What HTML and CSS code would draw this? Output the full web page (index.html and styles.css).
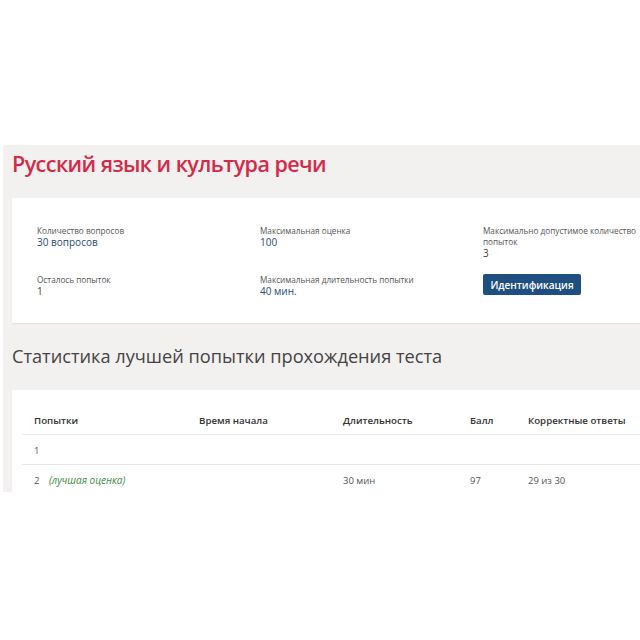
FILE: index.html
```html
<!DOCTYPE html>
<html lang="ru">
<head>
<meta charset="utf-8">
<title>Русский язык и культура речи</title>
<link rel="stylesheet" href="styles.css">
</head>
<body>
<div class="frame">
  <h1 class="course-title">Русский язык и культура речи</h1>
  <section class="card info">
    <div class="info-grid">
      <div class="field">
        <div class="label">Количество вопросов</div>
        <div class="value">30 вопросов</div>
      </div>
      <div class="field">
        <div class="label">Максимальная оценка</div>
        <div class="value">100</div>
      </div>
      <div class="field narrow">
        <div class="label">Максимально допустимое количество попыток</div>
        <div class="value plain">3</div>
      </div>
      <div class="field">
        <div class="label">Осталось попыток</div>
        <div class="value plain">1</div>
      </div>
      <div class="field">
        <div class="label">Максимальная длительность попытки</div>
        <div class="value">40 мин.</div>
      </div>
      <div class="field">
        <button class="btn">Идентификация</button>
      </div>
    </div>
  </section>
  <h2 class="section-title">Статистика лучшей попытки прохождения теста</h2>
  <section class="card stats">
    <div class="row head">
      <div>Попытки</div>
      <div>Время начала</div>
      <div>Длительность</div>
      <div>Балл</div>
      <div>Корректные ответы</div>
    </div>
    <div class="row">
      <div>1</div>
      <div></div>
      <div></div>
      <div></div>
      <div></div>
    </div>
    <div class="row">
      <div>2 <span class="best">(лучшая оценка)</span></div>
      <div></div>
      <div>30 мин</div>
      <div>97</div>
      <div>29 из 30</div>
    </div>
  </section>
</div>
</body>
</html>
```

FILE: styles.css
```css
html, body {
  margin: 0;
  padding: 0;
  background: #ffffff;
}
body {
  font-family: "Open Sans", "Liberation Sans", sans-serif;
  color: #555;
  padding-top: 145px;
  padding-left: 3px;
}
.frame {
  background: #f2f1ef;
  height: 347px;
  overflow: hidden;
  padding-left: 9px;
  box-sizing: border-box;
}
.course-title {
  margin: 0;
  padding-top: 4px;
  font-size: 21.5px;
  line-height: 30px;
  font-weight: 600;
  letter-spacing: -0.55px;
  color: #d42a49;
}
.card {
  background: #fff;
}
.info {
  margin-top: 19px;
  padding: 27px 0 26px 25px;
  border-bottom: 1px solid #e4e2df;
}
.info-grid {
  display: grid;
  grid-template-columns: 223px 223px 166px;
  row-gap: 15px;
}
.label {
  font-size: 8.2px;
  line-height: 11px;
  color: #555;
}
.value {
  font-size: 10px;
  line-height: 12px;
  color: #1f4a78;
}
.value.plain {
  color: #444;
}
.btn {
  display: block;
  width: 98px;
  height: 21px;
  padding: 0;
  border: none;
  border-radius: 2px;
  background: #1f4f80;
  color: #fff;
  font-family: "Open Sans", "Liberation Sans", sans-serif;
  font-size: 10px;
  font-weight: 600;
}
.section-title {
  margin: 0;
  padding-top: 20px;
  font-size: 18.2px;
  line-height: 24px;
  font-weight: 400;
  color: #444;
}
.stats {
  margin-top: 22px;
  padding: 18px 0 0 10px;
  height: 200px;
}
.row {
  display: grid;
  grid-template-columns: 165px 144px 127px 58px 160px;
  border-bottom: 1px solid #e8e8e8;
  font-size: 9.5px;
  color: #555;
}
.row > div {
  padding: 0 12px;
  height: 29px;
  line-height: 31px;
  white-space: nowrap;
}
.row.head > div {
  height: 26px;
  line-height: 10px;
  padding-top: 8px;
  box-sizing: border-box;
  font-size: 9.7px;
  font-weight: 600;
  color: #333;
}
.best {
  margin-left: 7px;
  font-size: 10px;
  font-style: italic;
  color: #3d8b3d;
}
```
